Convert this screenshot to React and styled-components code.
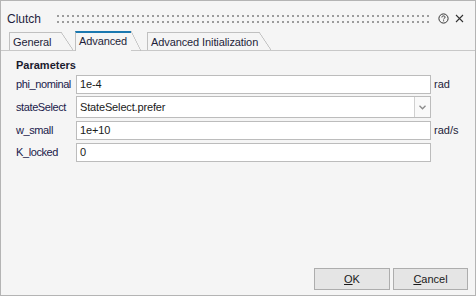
import React from "react";
import styled, { createGlobalStyle } from "styled-components";

const Global = createGlobalStyle`
  html, body { margin: 0; padding: 0; background: #f5f5f5; overflow: hidden; }
  * { box-sizing: border-box; }
`;

const FONT = `"Liberation Sans", Arial, sans-serif`;

const Dialog = styled.div`
  width: 476px;
  height: 296px;
  border: 1px solid #b4b4b4;
  background: #f5f5f5;
  display: flex;
  flex-direction: column;
  font-family: ${FONT};
  font-size: 11px;
  color: #1e1e3a;
`;

const TitleBar = styled.div`
  height: 30px;
  flex: none;
  display: flex;
  align-items: flex-start;
  padding: 11px 11px 0 6px;
`;

const Title = styled.div`
  font-size: 12px;
  line-height: 14px;
  color: #1e1e3c;
`;

const Grip = styled.div`
  flex: 1;
  height: 8px;
  margin: 3px 9px 0 16px;
  background-image:
    linear-gradient(to bottom, transparent 0 2px, #f5f5f5 2px),
    linear-gradient(to right, #9c9c9c 0 2px, transparent 2px);
  background-size: 5px 6px;
`;

const IconButton = styled.div`
  width: ${(p) => p.$w}px;
  height: 11px;
  margin-left: ${(p) => p.$ml}px;
  display: flex;
  align-items: center;
  justify-content: center;
  margin-top: 1px;
`;

const TabStrip = styled.div`
  flex: none;
  height: 20px;
  display: flex;
  align-items: flex-end;
  padding-left: 8px;
  border-bottom: 1px solid #c8c8c8;
`;

const Tab = styled.div`
  position: relative;
  width: ${(p) => p.$w}px;
  height: ${(p) => (p.$active ? 20 : 18)}px;
  margin-right: ${(p) => p.$mr}px;
  margin-bottom: ${(p) => (p.$active ? -1 : 0)}px;
  padding: 0 0 ${(p) => (p.$active ? 3 : 1)}px 3px;
  display: flex;
  align-items: flex-end;
  line-height: 13px;
  white-space: nowrap;
  letter-spacing: -0.1px;
  background: #f5f5f5;
  border-left: 1px solid #c0c0c0;
  border-top: ${(p) => (p.$active ? "2px solid #1a78b0" : "1px solid #c0c0c0")};
  color: #1e1e3a;
  z-index: ${(p) => (p.$active ? 1 : 0)};

  &::after {
    content: "";
    position: absolute;
    left: 100%;
    top: ${(p) => (p.$active ? -2 : -1)}px;
    width: ${(p) => p.$slant}px;
    height: ${(p) => (p.$active ? 20 : 18)}px;
    background: linear-gradient(
      to top right,
      transparent calc(50% - 0.7px),
      #b8b8b8 50%,
      transparent calc(50% + 0.7px)
    );
  }
`;

const Pane = styled.div`
  flex: 1;
  padding: 8px 0 0 15px;
`;

const Heading = styled.div`
  font-weight: bold;
  line-height: 13px;
  color: #1a1a2e;
  margin-bottom: 3px;
`;

const Grid = styled.div`
  display: grid;
  grid-template-columns: 60px 355px auto;
  row-gap: 3px;
  align-items: center;
`;

const Label = styled.div`
  line-height: 13px;
  color: #20204a;
  white-space: nowrap;
  letter-spacing: -0.4px;
`;

const Field = styled.div`
  height: ${(p) => (p.$tall ? 22 : 19)}px;
  border: 1px solid #bcbcbc;
  background: #fff;
  display: flex;
  align-items: center;
  padding-left: 3px;
  color: #1a1a1a;
  line-height: 13px;
  margin-top: ${(p) => (p.$tall ? -1 : 0)}px;
`;

const FieldText = styled.div`
  flex: 1;
  letter-spacing: -0.15px;
`;

const DropButton = styled.div`
  width: 16px;
  align-self: stretch;
  border-left: 1px solid #d0d0d0;
  background: #f9f9f9;
  display: flex;
  align-items: center;
  justify-content: center;
`;

const Unit = styled.div`
  padding-left: 3px;
  line-height: 13px;
  color: #1e1e3a;
`;

const Footer = styled.div`
  flex: none;
  display: flex;
  justify-content: flex-end;
  gap: 3px;
  padding: 0 7px 5px 0;
`;

const Button = styled.button`
  width: ${(p) => p.$w}px;
  height: 22px;
  border: 1px solid #adadad;
  background: #e5e5e5;
  font-family: ${FONT};
  font-size: 11px;
  color: #1a1a1a;
  padding: 0;
  line-height: 13px;
  u { text-decoration: underline; }
`;

const rows = [
  { label: "phi_nominal", value: "1e-4", unit: "rad" },
  { label: "stateSelect", value: "StateSelect.prefer", select: true },
  { label: "w_small", value: "1e+10", unit: "rad/s" },
  { label: "K_locked", value: "0" },
];

export default function App() {
  return (
    <>
      <Global />
      <Dialog>
        <TitleBar>
          <Title>Clutch</Title>
          <Grip />
          <IconButton $w={11} $ml={0}>
            <svg width="11" height="11" viewBox="0 0 11 11">
              <circle cx="5.5" cy="5.5" r="4.6" fill="none" stroke="#333" strokeWidth="1" />
              <path d="M3.9 4.4 C3.9 3.3 4.6 2.9 5.5 2.9 C6.4 2.9 7.1 3.4 7.1 4.2 C7.1 5.2 5.6 5.3 5.6 6.4" fill="none" stroke="#333" strokeWidth="1" />
              <rect x="5.1" y="7.3" width="1" height="1" fill="#333" />
            </svg>
          </IconButton>
          <IconButton $w={9} $ml={6}>
            <svg width="9" height="9" viewBox="0 0 9 9">
              <path d="M1 1 L8 8 M8 1 L1 8" stroke="#333" strokeWidth="1.1" />
            </svg>
          </IconButton>
        </TitleBar>
        <TabStrip>
          <Tab $w={52} $mr={14} $slant={12}>General</Tab>
          <Tab $w={56} $mr={16} $slant={10} $active>Advanced</Tab>
          <Tab $w={112} $mr={0} $slant={12}>Advanced Initialization</Tab>
        </TabStrip>
        <Pane>
          <Heading>Parameters</Heading>
          <Grid>
            {rows.map((r) => (
              <React.Fragment key={r.label}>
                <Label>{r.label}</Label>
                <Field $tall={r.select}>
                  <FieldText>{r.value}</FieldText>
                  {r.select && (
                    <DropButton>
                      <svg width="7" height="5" viewBox="0 0 7 5">
                        <path d="M0.5 0.8 L3.5 3.8 L6.5 0.8" fill="none" stroke="#8a8a8a" strokeWidth="1.3" />
                      </svg>
                    </DropButton>
                  )}
                </Field>
                <Unit>{r.unit || ""}</Unit>
              </React.Fragment>
            ))}
          </Grid>
        </Pane>
        <Footer>
          <Button $w={76}><u>O</u>K</Button>
          <Button $w={75}><u>C</u>ancel</Button>
        </Footer>
      </Dialog>
    </>
  );
}
